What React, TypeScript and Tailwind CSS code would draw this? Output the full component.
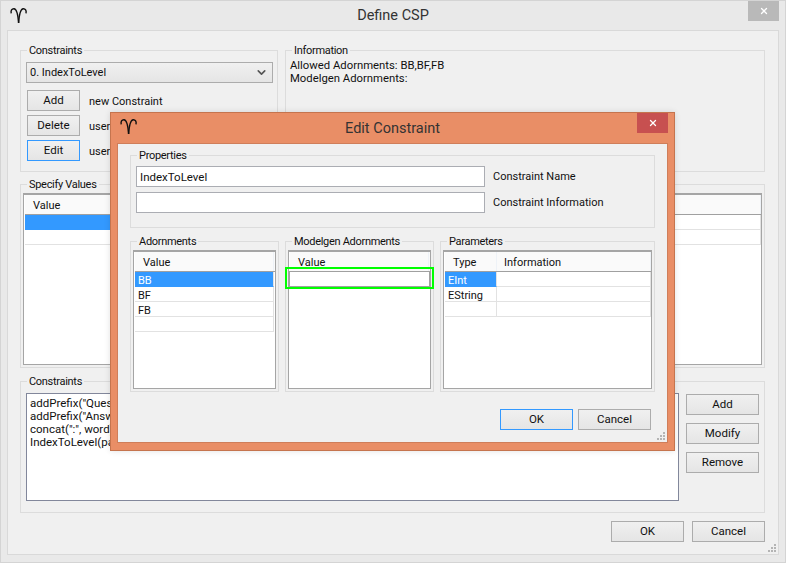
import { ChevronDown, X } from 'lucide-react'
import type { ReactNode } from 'react'

const AriesIcon = () => (
  <svg width="18" height="17" viewBox="0 0 18 17" fill="none" stroke="#111" strokeWidth="1.4">
    <path d="M8.6 16 C8.2 10 7.6 2 4 1.7 C1.8 1.6 .6 3.6 1.2 6.4" />
    <path d="M8.6 16 C9 10 9.6 2 13.2 1.7 C15.4 1.6 16.6 3.6 16 6.4" />
  </svg>
)

const Grip = () => (
  <svg width="9" height="9" viewBox="0 0 9 9" fill="#b4b4b4" className="absolute right-[1px] bottom-[1px]">
    <rect x="6" y="0" width="2" height="2" />
    <rect x="3" y="3" width="2" height="2" />
    <rect x="6" y="3" width="2" height="2" />
    <rect x="0" y="6" width="2" height="2" />
    <rect x="3" y="6" width="2" height="2" />
    <rect x="6" y="6" width="2" height="2" />
  </svg>
)

function Btn({ children, focused, className }: { children: ReactNode; focused?: boolean; className?: string }) {
  return (
    <button
      className={`h-[21px] shrink-0 border bg-gradient-to-b from-[#f0f0f0] to-[#e5e5e5] text-[11.5px] leading-[17px] text-[#111] ${
        focused ? 'border-[#3399ff]' : 'border-[#acacac]'
      } ${className ?? ''}`}
    >
      {children}
    </button>
  )
}

function Group({ title, className, children }: { title: string; className?: string; children?: ReactNode }) {
  return (
    <fieldset className={`min-w-0 border border-[#dcdcdc] ${className ?? ''}`}>
      <legend className="ml-[6px] px-[2px] pt-[2px] text-[11px] leading-[14px] tracking-[-0.3px] text-[#111]">{title}</legend>
      {children}
    </fieldset>
  )
}

type Column = { label: string; width: string; pad: string }

function DataGrid({ columns, rows, selected, className }: { columns: Column[]; rows: string[][]; selected?: boolean; className?: string }) {
  return (
    <div className={`overflow-hidden border border-t-2 border-[#a5a5a5] bg-white pl-[1px] ${className ?? ''}`}>
      <div className="flex h-[20px] border-b border-[#a0a0a0] bg-[#fafafa] text-[11px] leading-[22px] text-[#111]">
        {columns.map((c) => (
          <div key={c.label} className={`${c.width} ${c.pad} border-r border-[#eef2f7]`}>
            {c.label}
          </div>
        ))}
      </div>
      {rows.map((row, i) => (
        <div key={i} className="flex h-[15px] text-[11px] leading-[17px] text-[#111]">
          {columns.map((c, j) => (
            <div
              key={c.label}
              className={`${c.width} overflow-hidden border-b border-r border-[#e2e2e2] pl-[3px] ${
                selected && i === 0 && j === 0 ? 'border-b-transparent bg-[#3399ff] text-white' : ''
              }`}
            >
              {row[j]}
            </div>
          ))}
        </div>
      ))}
    </div>
  )
}

const valueCol: Column = { label: 'Value', width: 'w-[139px]', pad: 'pl-[8px]' }

export default function App() {
  return (
    <div
      className="relative flex h-[563px] w-[786px] flex-col overflow-hidden border border-[#d4d4d4] bg-[#e9e9e9] text-[11px] text-[#111]"
      style={{ fontFamily: 'Roboto, "Liberation Sans", sans-serif' }}
    >
      {/* main window */}
      <div className="relative flex h-[29px] shrink-0 items-center justify-center">
        <div className="absolute left-[9px] top-[6px]">
          <AriesIcon />
        </div>
        <span className="text-[14.5px] text-[#333]">Define CSP</span>
        <div className="absolute right-[6px] top-0 flex h-[20px] w-[31px] items-center justify-center bg-[#b9b9b9]">
          <X size={10} strokeWidth={3} color="#fff" />
        </div>
      </div>

      <div className="relative mx-[6px] mb-[7px] flex-1 border border-[#d9d9d9] bg-[#f0f0f0] pl-[12px] pr-[13px] pt-[11px]">
        <div className="flex gap-[7px]">
          <Group title="Constraints" className="h-[130px] w-[258px] shrink-0">
            <div className="ml-[5px] mt-[4px] flex h-[21px] w-[247px] items-center justify-between border border-[#acacac] bg-gradient-to-b from-[#f0f0f0] to-[#e5e5e5] pl-[3px] pr-[4px]">
              <span className="pt-[2px]">0. IndexToLevel</span>
              <ChevronDown size={13} strokeWidth={3} color="#555" />
            </div>
            <div className="ml-[6px] mt-[7px] flex flex-col gap-[4px]">
              <div className="flex items-center gap-[9px]">
                <Btn className="w-[53px]">Add</Btn>
                <span className="pt-[3px]">new Constraint</span>
              </div>
              <div className="flex items-center gap-[9px]">
                <Btn className="w-[53px]">Delete</Btn>
                <span className="pt-[3px]">user</span>
              </div>
              <div className="flex items-center gap-[9px]">
                <Btn focused className="w-[53px]">Edit</Btn>
                <span className="pt-[3px]">user</span>
              </div>
            </div>
          </Group>
          <Group title="Information" className="h-[130px] flex-1">
            <div className="pl-[4px] pt-[1px] text-[11.3px] leading-[13px]">
              <div>Allowed Adornments: BB,BF,FB</div>
              <div>Modelgen Adornments:</div>
            </div>
          </Group>
        </div>

        <Group title="Specify Values" className="mt-[4px] h-[192px]">
          <DataGrid
            selected
            className="ml-[2px] mt-[1px] h-[172px] w-[739px]"
            columns={[
              { label: 'Value', width: 'w-[100px]', pad: 'pl-[8px]' },
              { label: '', width: 'flex-1', pad: '' },
            ]}
            rows={[['', ''], ['', '']]}
          />
        </Group>

        <Group title="Constraints" className="mt-[5px] h-[140px]">
          <div className="flex">
            <div className="ml-[5px] mt-[4px] h-[108px] w-[653px] overflow-hidden border border-[#82879b] bg-white pl-[3px] pt-[3px] text-[11.5px] leading-[13px]">
              <div>addPrefix("Question")</div>
              <div>addPrefix("Answer")</div>
              <div>concat(":", word)</div>
              <div>IndexToLevel(param)</div>
            </div>
            <div className="ml-[7px] mt-[5px] flex flex-col gap-[8px]">
              <Btn className="w-[73px]">Add</Btn>
              <Btn className="w-[73px]">Modify</Btn>
              <Btn className="w-[73px]">Remove</Btn>
            </div>
          </div>
        </Group>

        <div className="mt-[8px] flex justify-end gap-[8px]">
          <Btn className="w-[73px]">OK</Btn>
          <Btn className="w-[73px]">Cancel</Btn>
        </div>
        <Grip />
      </div>

      {/* edit dialog */}
      <div className="absolute left-[109px] top-[111px] flex h-[339px] w-[565px] flex-col border border-[#c5744e] bg-[#e98e66] px-[6px] pb-[7px] shadow-[0_0_6px_rgba(0,0,0,0.12)]">
        <div className="relative flex h-[30px] shrink-0 items-center justify-center">
          <div className="absolute left-[3px] top-[5px]">
            <AriesIcon />
          </div>
          <span className="pt-[2px] text-[14.5px] text-[#333]">Edit Constraint</span>
          <div className="absolute right-0 top-0 flex h-[20px] w-[31px] items-center justify-center bg-[#c75050]">
            <X size={10} strokeWidth={3} color="#fff" />
          </div>
        </div>

        <div className="relative flex-1 border border-[#cf7e5a] bg-[#f0f0f0] px-[12px] pt-[3px]">
          <Group title="Properties" className="h-[81px]">
            <div className="ml-[5px] mt-[3px] flex flex-col gap-[5px]">
              <div className="flex items-center gap-[8px]">
                <input
                  readOnly
                  defaultValue="IndexToLevel"
                  className="h-[21px] w-[349px] border border-[#abadb3] bg-white px-[3px] text-[11.5px] text-[#111]"
                />
                <span className="pt-[1px]">Constraint Name</span>
              </div>
              <div className="flex items-center gap-[8px]">
                <input readOnly className="h-[21px] w-[349px] border border-[#abadb3] bg-white px-[3px]" />
                <span className="pt-[1px]">Constraint Information</span>
              </div>
            </div>
          </Group>

          <div className="mt-[5px] flex gap-[6px]">
            <Group title="Adornments" className="h-[159px] w-[149px] shrink-0">
              <DataGrid
                selected
                className="ml-[2px] mt-[1px] h-[139px] w-[143px]"
                columns={[valueCol]}
                rows={[['BB'], ['BF'], ['FB'], ['']]}
              />
            </Group>
            <Group title="Modelgen Adornments" className="h-[159px] w-[149px] shrink-0">
              <div className="relative ml-[2px] mt-[1px] w-[143px]">
                <DataGrid className="h-[139px]" columns={[valueCol]} rows={[]} />
                <div className="absolute left-[1px] right-[1px] top-[21px] h-[16px] border border-[#a0a0a0]" />
                <div className="absolute -left-[3px] -right-[3px] top-[17px] h-[22px] border-2 border-[#00ff00]" />
              </div>
            </Group>
            <Group title="Parameters" className="h-[159px] flex-1">
              <DataGrid
                selected
                className="ml-[2px] mt-[1px] h-[139px] w-[209px]"
                columns={[
                  { label: 'Type', width: 'w-[52px]', pad: 'pl-[8px]' },
                  { label: 'Information', width: 'w-[154px]', pad: 'pl-[7px]' },
                ]}
                rows={[['EInt', ''], ['EString', ''], ['', '']]}
              />
            </Group>
          </div>

          <div className="mt-[17px] flex justify-end gap-[5px] pr-[4px]">
            <Btn focused className="w-[73px]">OK</Btn>
            <Btn className="w-[73px]">Cancel</Btn>
          </div>
          <Grip />
        </div>
      </div>
    </div>
  )
}
